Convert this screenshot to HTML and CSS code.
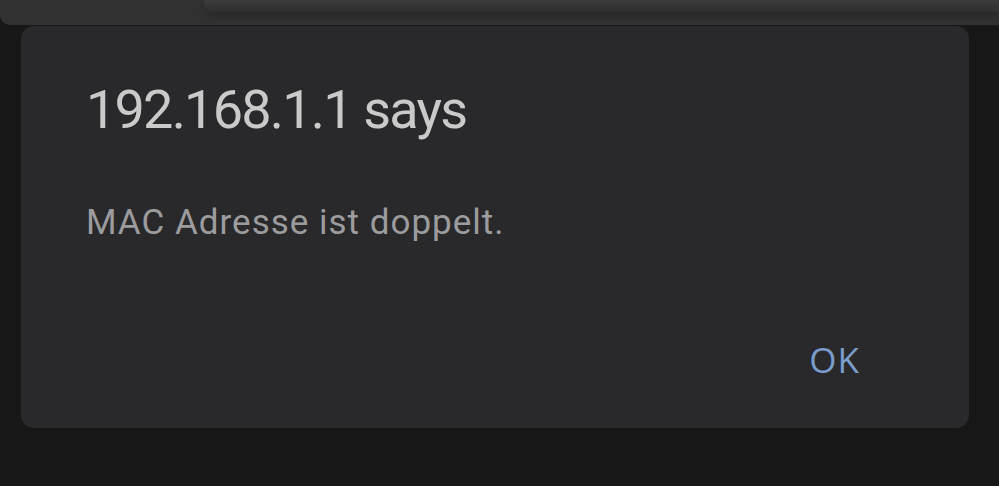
FILE: index.html
```html
<!DOCTYPE html>
<html lang="de">
<head>
<meta charset="utf-8">
<title>192.168.1.1 says</title>
<link rel="stylesheet" href="styles.css">
</head>
<body>
  <div class="topbar">
    <div class="topbar-left"></div>
    <div class="topbar-right"></div>
  </div>
  <div class="dialog">
    <h1 class="dialog-title">192.168.1.1 says</h1>
    <p class="dialog-message">MAC Adresse ist doppelt.</p>
    <div class="dialog-actions">
      <button class="dialog-button">OK</button>
    </div>
  </div>
</body>
</html>
```
FILE: styles.css
```css
html, body {
  margin: 0;
  padding: 0;
  background: #171717;
  width: 999px;
  height: 486px;
  overflow: hidden;
  font-family: Roboto, "Noto Sans", sans-serif;
}

.topbar {
  display: flex;
  height: 25px;
  background: #313131;
  border-bottom-left-radius: 10px;
}

.topbar-left {
  width: 204px;
}

.topbar-right {
  flex: 1;
  background: linear-gradient(#3c3c3c, #363636 45%, #2f2f2f);
  border-bottom-left-radius: 10px;
  height: 12px;
  align-self: flex-start;
  box-shadow: 0 6px 6px rgba(0, 0, 0, 0.15);
}

.dialog {
  margin: 1px 30px 0 21px;
  height: 402px;
  background: #29292c;
  border-radius: 13px;
  box-sizing: border-box;
  padding: 54px 0 0 65px;
  display: flex;
  flex-direction: column;
}

.dialog-title {
  margin: 0;
  font-weight: 400;
  font-size: 54px;
  line-height: 60px;
  color: #cacaca;
  letter-spacing: -1.8px;
}

.dialog-message {
  margin: 63px 0 0 0;
  font-size: 35px;
  line-height: 40px;
  color: #9c9c9e;
  letter-spacing: 1px;
}

.dialog-actions {
  display: flex;
  justify-content: flex-end;
  margin-top: 97px;
  padding-right: 109px;
}

.dialog-button {
  background: none;
  border: none;
  padding: 0;
  font-family: "Open Sans", Roboto, sans-serif;
  font-weight: 400;
  font-size: 35px;
  line-height: 40px;
  color: #7a9dcc;
  letter-spacing: 1px;
}
```
